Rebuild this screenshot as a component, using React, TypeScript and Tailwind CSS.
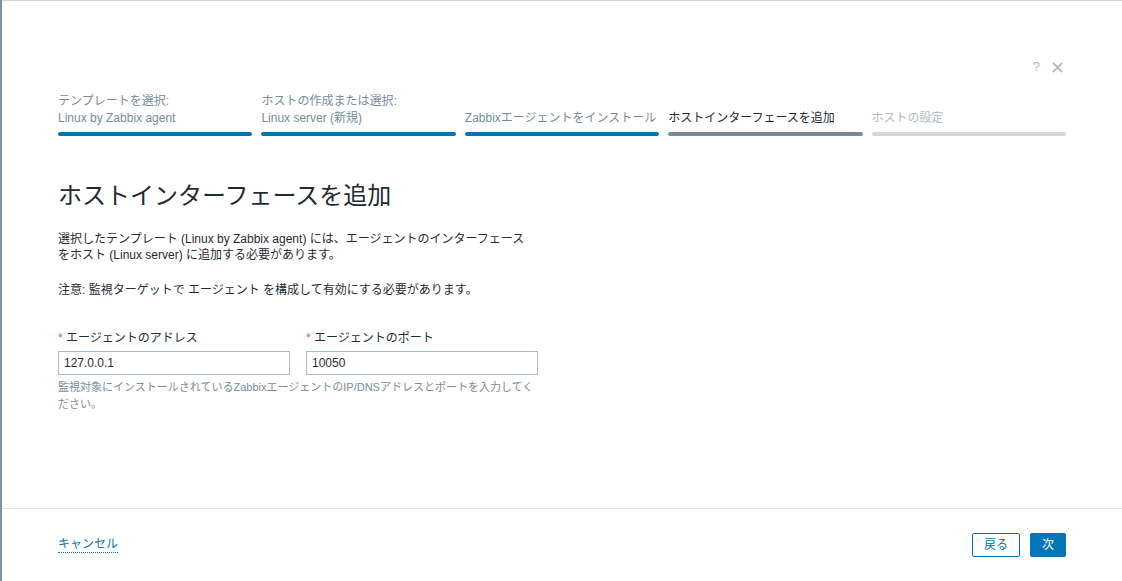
import React from "react";

const font = { fontFamily: '"Liberation Sans", Arial, "Noto Sans CJK JP", sans-serif' };

const steps = [
  { l1: "テンプレートを選択:", l2: "Linux by Zabbix agent", state: "done" },
  { l1: "ホストの作成または選択:", l2: "Linux server (新規)", state: "done" },
  { l1: "", l2: "Zabbixエージェントをインストール", state: "done" },
  { l1: "", l2: "ホストインターフェースを追加", state: "current" },
  { l1: "", l2: "ホストの設定", state: "todo" },
];

const App = () => {
  return (
    <div className="flex h-screen w-full bg-white text-[12px] text-[#1f2c33]" style={font}>
      <div className="w-[2px] bg-[#7d93a3]" />
      <div className="flex flex-1 flex-col border-t border-[#ccd5d9]">
        <div className="flex-1 px-[56px] pt-[57px]">
          <div className="flex h-[18px] items-center justify-end gap-[12px] pr-[3px] text-[#acbbc2]">
            <span className="text-[13px]">?</span>
            <svg viewBox="0 0 12 12" className="h-[11px] w-[11px]" stroke="currentColor" strokeWidth="2" fill="none">
              <path d="M1 1l10 10M11 1L1 11" />
            </svg>
          </div>

          <div className="mt-[17px] grid grid-cols-5 gap-[9px]">
            {steps.map((s, i) => (
              <div key={i} className="flex flex-col">
                <div
                  className={
                    "flex h-[34px] flex-col justify-end leading-[17px] " +
                    (s.state === "done"
                      ? "text-[#768d99]"
                      : s.state === "current"
                      ? "text-[#1f2c33]"
                      : "text-[#acbbc2]")
                  }
                >
                  {s.l1 && <div>{s.l1}</div>}
                  <div>{s.l2}</div>
                </div>
                <div
                  className={
                    "mt-[5px] h-[4px] rounded-full " +
                    (s.state === "done"
                      ? "bg-[#0275b8]"
                      : s.state === "current"
                      ? "bg-[#768d99]"
                      : "bg-[#cfd8dc]")
                  }
                />
              </div>
            ))}
          </div>

          <h1 className="mt-[46px] text-[24px] leading-[28px] font-normal">ホストインターフェースを追加</h1>

          <div className="mt-[21px] w-[480px] leading-[16px]">
            <p className="w-[470px]">
              選択したテンプレート (Linux by Zabbix agent) には、エージェントのインターフェースをホスト (Linux server) に追加する必要があります。
            </p>
            <p className="mt-[19px]">注意: 監視ターゲットで エージェント を構成して有効にする必要があります。</p>

            <div className="mt-[32px] grid grid-cols-2 gap-[16px]">
              <div>
                <label className="block leading-[16px]">
                  <span className="text-[#e45959]">*</span> エージェントのアドレス
                </label>
                <input
                  defaultValue="127.0.0.1"
                  className="mt-[5px] h-[24px] w-full border border-[#acbbc2] px-[5px] text-[12px] text-[#1f2c33] outline-none"
                  style={font}
                />
              </div>
              <div>
                <label className="block leading-[16px]">
                  <span className="text-[#e45959]">*</span> エージェントのポート
                </label>
                <input
                  defaultValue="10050"
                  className="mt-[5px] h-[24px] w-full border border-[#acbbc2] px-[5px] text-[12px] text-[#1f2c33] outline-none"
                  style={font}
                />
              </div>
            </div>
            <p className="mt-[4px] text-[11px] leading-[17px] text-[#768d99]">
              監視対象にインストールされているZabbixエージェントのIP/DNSアドレスとポートを入力してください。
            </p>
          </div>
        </div>

        <div className="flex items-center justify-between border-t border-[#dfe4e7] px-[56px] py-[24px]">
          <a href="#" className="border-b border-dotted border-[#0275b8] leading-[15px] text-[#0275b8]">
            キャンセル
          </a>
          <div className="flex gap-[10px]">
            <button className="h-[24px] w-[48px] rounded-[2px] border border-[#0275b8] bg-white text-[12px] text-[#0275b8]">
              戻る
            </button>
            <button className="h-[24px] w-[36px] rounded-[2px] border border-[#0275b8] bg-[#0275b8] text-[12px] text-white">
              次
            </button>
          </div>
        </div>
      </div>
    </div>
  );
};

export default App;
